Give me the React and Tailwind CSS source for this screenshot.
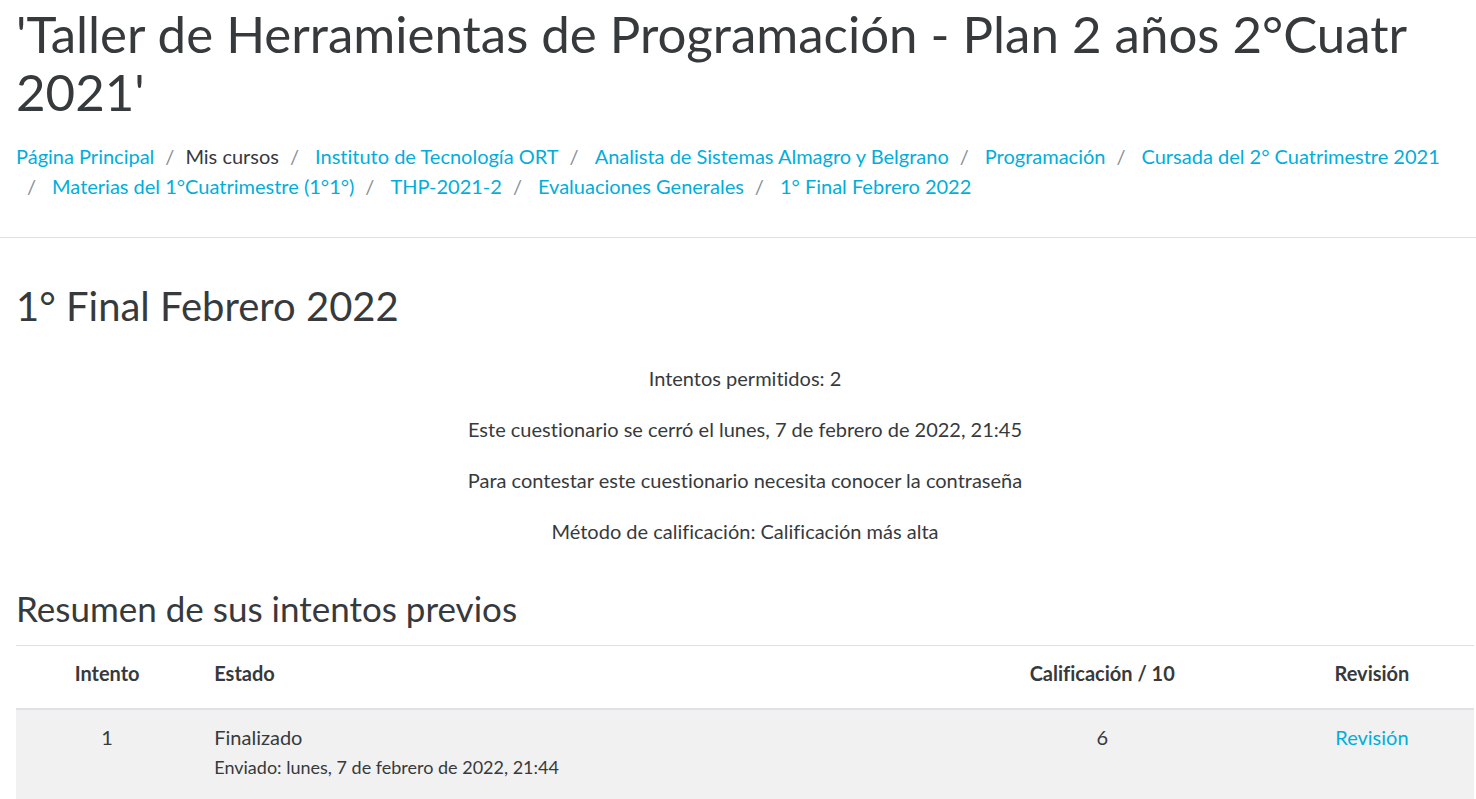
const crumbs = [
  { label: 'Página Principal', link: true },
  { label: 'Mis cursos', link: false },
  { label: 'Instituto de Tecnología ORT', link: true },
  { label: 'Analista de Sistemas Almagro y Belgrano', link: true },
  { label: 'Programación', link: true },
  { label: 'Cursada del 2° Cuatrimestre 2021', link: true },
  { label: 'Materias del 1°Cuatrimestre (1°1°)', link: true },
  { label: 'THP-2021-2', link: true },
  { label: 'Evaluaciones Generales', link: true },
  { label: '1° Final Febrero 2022', link: true },
];

const info = [
  'Intentos permitidos: 2',
  'Este cuestionario se cerró el lunes, 7 de febrero de 2022, 21:45',
  'Para contestar este cuestionario necesita conocer la contraseña',
  'Método de calificación: Calificación más alta',
];

function Breadcrumbs() {
  return (
    <nav aria-label="Ruta de navegación">
      <ol className="flex flex-wrap">
        {crumbs.map((crumb, index) => (
          <li key={crumb.label} className="flex whitespace-nowrap">
            {index > 0 && (
              <span aria-hidden="true" className={crumb.link ? 'pl-[11px] pr-4 text-[#868e96]' : 'px-[11px] text-[#868e96]'}>
                /
              </span>
            )}
            {crumb.link ? (
              <a href="#" className="text-[#00aedb] hover:underline">{crumb.label}</a>
            ) : (
              <span>{crumb.label}</span>
            )}
          </li>
        ))}
      </ol>
    </nav>
  );
}

export default function App() {
  return (
    <div className="min-h-screen overflow-hidden bg-white font-['Lato','Noto_Sans',sans-serif] text-xl leading-[30px] text-[#373a3c] [font-variant-ligatures:none]">
      <header className="border-b border-[#dddfe1] px-4 pt-[5px] pb-9">
        <h1 className="mb-5 text-[51px] leading-[58px]">
          'Taller de Herramientas de Programación - Plan 2 años 2°Cuatr 2021'
        </h1>
        <Breadcrumbs />
      </header>

      <main className="pt-11 pl-4 pr-0.5">
        <h2 className="mb-8 text-[40px] leading-[49px]">1° Final Febrero 2022</h2>
        <div className="flex flex-col gap-[21px] text-center">
          {info.map((line) => (
            <p key={line}>{line}</p>
          ))}
        </div>

        <h3 className="mt-[39px] mb-3.5 text-[35px] leading-[46px]">Resumen de sus intentos previos</h3>
        <table className="w-full table-fixed border-collapse border-t border-[#dddfe1]">
          <colgroup>
            <col className="w-[12.5%]" />
            <col />
            <col className="w-[23%]" />
            <col className="w-[14%]" />
          </colgroup>
          <thead>
            <tr className="border-b-2 border-[#dee2e6]">
              <th scope="col" className="px-4 pt-3 pb-5 text-center font-bold">Intento</th>
              <th scope="col" className="px-4 pt-3 pb-5 text-left font-bold">Estado</th>
              <th scope="col" className="px-4 pt-3 pb-5 text-center font-bold">Calificación / 10</th>
              <th scope="col" className="px-4 pt-3 pb-5 text-center font-bold">Revisión</th>
            </tr>
          </thead>
          <tbody>
            <tr className="bg-[#f1f1f1] align-top">
              <td className="px-4 pt-3 pb-5 text-center">1</td>
              <td className="px-4 pt-3 pb-5">
                Finalizado
                <span className="block text-lg leading-[30px]">Enviado: lunes, 7 de febrero de 2022, 21:44</span>
              </td>
              <td className="px-4 pt-3 pb-5 text-center">6</td>
              <td className="px-4 pt-3 pb-5 text-center">
                <a href="#" className="text-[#00aedb] hover:underline">Revisión</a>
              </td>
            </tr>
          </tbody>
        </table>
      </main>
    </div>
  );
}
